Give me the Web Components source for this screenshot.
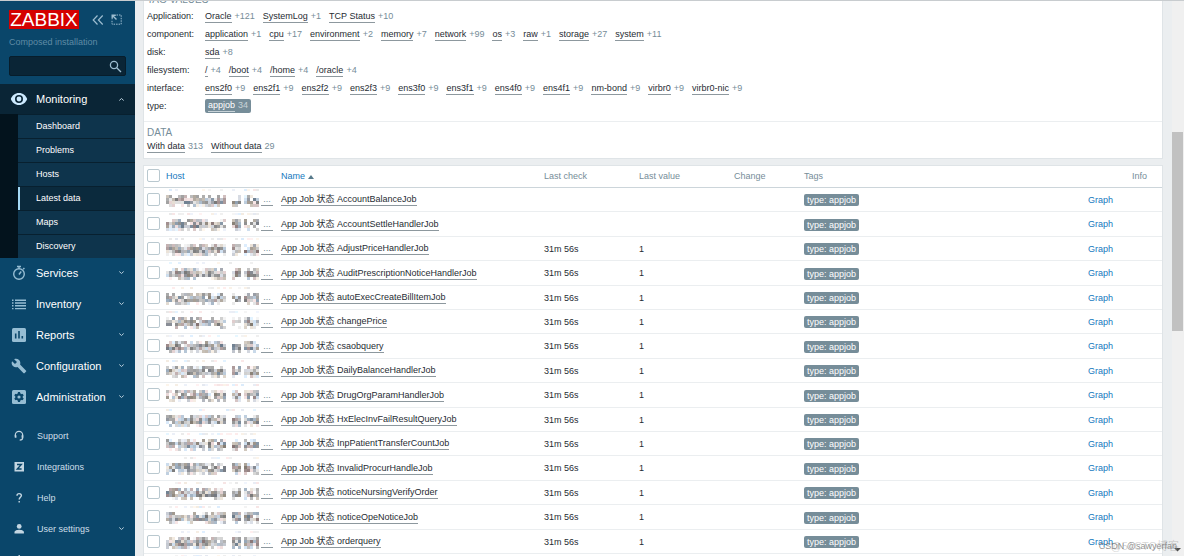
<!DOCTYPE html>
<html lang="en">
<head>
<meta charset="utf-8">
<title>Latest data</title>
<style>
html, body { height: 100%; margin: 0; }
body {
  font-family: "Liberation Sans", Arial, "Noto Sans CJK SC", sans-serif;
  font-size: 9px; line-height: 12px; color: #1f2c33; background: #ebeef0; overflow: hidden;
}
</style>
</head>
<body>
<app-shell>
  <side-bar slot="side">
    <nav-item label="Monitoring" icon="eye" open slot="main">
      <sub-item label="Dashboard"></sub-item>
      <sub-item label="Problems"></sub-item>
      <sub-item label="Hosts"></sub-item>
      <sub-item label="Latest data" selected></sub-item>
      <sub-item label="Maps"></sub-item>
      <sub-item label="Discovery"></sub-item>
    </nav-item>
    <nav-item label="Services" icon="timer" more slot="main"></nav-item>
    <nav-item label="Inventory" icon="list" more slot="main"></nav-item>
    <nav-item label="Reports" icon="chart" more slot="main"></nav-item>
    <nav-item label="Configuration" icon="wrench" more slot="main"></nav-item>
    <nav-item label="Administration" icon="gear" more slot="main"></nav-item>
    <nav-item label="Support" icon="headset" small slot="foot"></nav-item>
    <nav-item label="Integrations" icon="zed" small slot="foot"></nav-item>
    <nav-item label="Help" icon="help" small slot="foot"></nav-item>
    <nav-item label="User settings" icon="user" small more slot="foot"></nav-item>
    <nav-item label="Sign out" icon="power" small slot="foot"></nav-item>
  </side-bar>
  <filter-panel></filter-panel>
  <data-table></data-table>
  <scroll-track slot="track"></scroll-track>
  <page-mark slot="mark"></page-mark>
</app-shell>

<script>
const ICONS = {
  eye: '<svg width="18" height="18" viewBox="0 0 18 18"><path fill="currentColor" fill-rule="evenodd" d="M9 3C5 3 2 5.600.8 9 2 12.400 5 15 9 15s7-2.600 8.200-6C16 5.600 13 3 9 3zm0 10a4 4 0 1 1 0-8 4 4 0 0 1 0 8z"/><circle cx="9" cy="9" r="2.400" fill="currentColor"/></svg>',
  timer: '<svg width="18" height="18" viewBox="0 0 18 18" fill="none" stroke="currentColor"><circle cx="9" cy="10" r="5.300" stroke-width="1.400"/><path stroke-width="1.400" d="M7 2.500h4M9 2.500v2M13.200 5.200l1.200-1.200"/><path stroke-width="1.500" d="M9 10.500l2.200-3"/></svg>',
  list: '<svg width="18" height="18" viewBox="0 0 18 18" fill="currentColor"><path d="M2 4.500h1.500V6H2zM5 4.500h11V6H5zM2 7.300h1.500v1.500H2zM5 7.300h11v1.500H5zM2 10.100h1.500v1.500H2zM5 10.100h11v1.500H5zM2 12.900h1.500v1.300H2zM5 12.900h11v1.300H5z"/></svg>',
  chart: '<svg width="18" height="18" viewBox="0 0 18 18"><rect x="2" y="2" width="14" height="14" rx="1.500" fill="currentColor"/><path stroke="#0a466a" stroke-width="1.600" d="M5.700 7.500v5M9 5v7.500M12.300 10v2.500"/></svg>',
  wrench: '<svg width="16" height="16" viewBox="0 0 24 24"><path fill="currentColor" d="M22.700 19l-9.100-9.100c.9-2.300.4-5-1.500-6.900-2-2-5-2.400-7.400-1.300L9 6 6 9 1.600 4.700C.4 7.100.9 10.100 2.900 12.100c1.900 1.900 4.600 2.400 6.900 1.500l9.100 9.100c.4.4 1 .4 1.400 0l2.300-2.300c.5-.4.5-1.100.1-1.400z"/></svg>',
  gear: '<svg width="18" height="18" viewBox="0 0 18 18"><rect x="2" y="2" width="14" height="14" rx="1.500" fill="currentColor"/><circle cx="9" cy="9" r="2.700" fill="none" stroke="#0a466a" stroke-width="2.200"/><path stroke="#0a466a" stroke-width="2.200" d="M9 4.100v1.800M9 12.100v1.800M4.800 6.600l1.500.9M11.700 10.500l1.500.9M4.800 11.400l1.500-.9M11.700 7.500l1.500-.9"/></svg>',
  headset: '<svg width="12" height="12" viewBox="0 0 12 12" fill="none" stroke="currentColor"><path stroke-width="1.200" d="M2.300 6.500V5a3.700 3.700 0 0 1 7.400 0v2.500c0 1.700-1 2.700-3 2.700"/><path stroke-width="1.700" d="M2.600 5.200v2.600M9.400 5.200v2.600"/></svg>',
  zed: '<svg width="12" height="12" viewBox="0 0 12 12"><rect x="1.500" y="1" width="9.500" height="9.500" fill="currentColor"/><path fill="none" stroke="#0a466a" stroke-width="1.400" d="M4 3.500h4.300L4.300 8h4.300"/></svg>',
  help: '<svg width="12" height="12" viewBox="0 0 12 12" fill="none" stroke="currentColor"><path stroke-width="1.400" d="M4 3.800C4 1 8.400 1 8.400 3.600 8.400 5.300 6.200 5.500 6.200 7.600M6.200 9v1.500"/></svg>',
  user: '<svg width="12" height="12" viewBox="0 0 12 12" fill="currentColor"><circle cx="6.200" cy="3.400" r="2.400"/><path d="M1.500 10.500V9.200C1.500 7.500 4.500 6.800 6.200 6.800s4.700.7 4.700 2.400v1.300z"/></svg>',
  power: '<svg width="12" height="12" viewBox="0 0 12 12" fill="none" stroke="currentColor" stroke-width="1.400"><path d="M6.200 1v5M3.500 2.800a4 4 0 1 0 5.400 0"/></svg>'
};

function define(name, markup) {
  const tpl = document.createElement('template');
  customElements.define(name, class extends HTMLElement {
    connectedCallback() {
      if (this.shadowRoot) return;
      tpl.innerHTML = typeof markup === 'function' ? markup(this) : markup;
      this.attachShadow({ mode: 'open' }).append(tpl.content.cloneNode(true));
    }
  });
}

define('app-shell', `<style>
:host { display: flex; height: 100%; min-height: 0; position: relative; box-sizing: border-box; border-top: 1px solid #c8cccf; overflow: hidden; }
main { flex: 1; min-width: 0; padding: 0 9px 0 8px; display: flex; flex-direction: column; gap: 6px; overflow: hidden; }
</style><slot name="side"></slot><main><slot></slot></main><slot name="track"></slot><slot name="mark"></slot>`);

define('side-bar', `<style>
:host { display: block; flex: none; width: 135px; background: #0a466a; overflow: hidden; }
header { padding: 9px 9px 8px; }
.top { display: flex; align-items: center; }
.logo { background: #d40000; color: #fff; font-size: 19px; line-height: 19px; padding: 0 1px; text-decoration: none; margin-right: 13px; width: 68px; text-align: center; }
button { border: 0; background: none; padding: 0; color: #9dbdd0; display: flex; }
.top button + button { margin-left: 7px; }
.server { color: #5f8ba5; margin: 6px 0; line-height: 15px; }
form { display: flex; align-items: center; box-sizing: border-box; height: 20px; background: #0a2536; border: 1px solid #071d2b; border-radius: 2px; padding-right: 3px; }
input { flex: 1; min-width: 0; border: 0; outline: 0; background: none; color: #fff; font: inherit; padding: 0 4px; }
footer { padding-top: 8px; }
</style>
<header>
  <div class="top"><a class="logo" href="#">ZABBIX</a>
    <button aria-label="Collapse"><svg width="12" height="12" viewBox="0 0 12 12" fill="none" stroke="currentColor" stroke-width="1.200"><path d="M5.500 1.500L1.200 6l4.300 4.500M10.700 1.500L6.400 6l4.300 4.500"/></svg></button>
    <button aria-label="Hide"><svg width="11" height="11" viewBox="0 0 11 11" fill="none" stroke="currentColor"><path stroke-dasharray="1.500 1" d="M5.500 1h4.700v9.200H1V5.500"/><path stroke-width="1.400" d="M1.200 4.800V1.200h3.600M1.500 1.500l4 4"/></svg></button>
  </div>
  <div class="server">Composed installation</div>
  <form><input type="text" aria-label="Search"><button type="button" aria-label="Search"><svg width="13" height="13" viewBox="0 0 13 13" fill="none" stroke="currentColor" stroke-width="1.300"><circle cx="5" cy="5" r="3.600"/><path d="M7.700 7.700l4.300 4.300"/></svg></button></form>
</header>
<nav><slot name="main"></slot></nav>
<footer><slot name="foot"></slot></footer>`);

define('nav-item', el => {
  const arrow = el.hasAttribute('open') ? 'M1.300 4.500L3.500 2.500 5.700 4.500' : 'M1.300 2.500L3.500 4.500 5.700 2.500';
  const chevron = el.hasAttribute('open') || el.hasAttribute('more')
    ? `<svg width="7" height="7" viewBox="0 0 7 7" fill="none" stroke="currentColor"><path d="${arrow}"/></svg>` : '';
  return `<style>
:host { display: block; }
a { display: flex; align-items: center; box-sizing: border-box; height: 31px; padding: 0 9px 2px; color: #fff; font-size: 11px; text-decoration: none; }
.icon { width: 19px; display: flex; justify-content: center; margin-right: 8px; color: #96bdd3; }
.label { flex: 1; white-space: nowrap; }
svg { display: block; }
a > svg { margin-right: 1px; color: #b9cedb; }
:host([small]) a { font-size: 9px; color: #cfdfe9; }
:host([small]) .icon { color: #c3d6e2; margin-right: 9px; }
:host([open]) a { background: #0a2536; height: 30px; padding-bottom: 0; }
:host([open]) .icon { color: #cdeaff; }
.sub { padding-left: 18px; background: #03131d; }
</style><a href="#"><span class="icon">${ICONS[el.getAttribute('icon')]}</span><span class="label">${el.getAttribute('label')}</span>${chevron}</a><div class="sub"><slot></slot></div>`;
});

define('sub-item', el => `<style>
:host { display: block; background: #0e344c; border-top: 1px solid #08202f; }
:host([selected]) { background: #0b2a3d; }
a { display: block; line-height: 23px; padding-left: 16px; border-left: 2px solid transparent; color: #fff; text-decoration: none; }
:host([selected]) a { border-color: #a5d9f5; }
</style><a href="#">${el.getAttribute('label')}</a>`);

const TAGS = [
  ['Application:', 'Oracle +121|SystemLog +1|TCP_Status +10'],
  ['component:', 'application +1|cpu +17|environment +2|memory +7|network +99|os +3|raw +1|storage +27|system +11'],
  ['disk:', 'sda +8'],
  ['filesystem:', '/ +4|/boot +4|/home +4|/oracle +4'],
  ['interface:', 'ens2f0 +9|ens2f1 +9|ens2f2 +9|ens2f3 +9|ens3f0 +9|ens3f1 +9|ens4f0 +9|ens4f1 +9|nm-bond +9|virbr0 +9|virbr0-nic +9'],
  ['type:', 'appjob 34']
];
define('count-link', `<style>
:host { display: inline-flex; align-items: baseline; gap: 3px; color: #768d99; white-space: nowrap; line-height: 12px; }
a { color: #1f2c33; text-decoration: none; border-bottom: 1px solid #8d989e; line-height: 12px; }
:host([selected]) { background: #768d99; color: #c8d3d8; border-radius: 2px; padding: 0 3px 1px; }
:host([selected]) a { color: #fff; border-color: #c8d3d8; }
</style><a href="#"><slot></slot></a><slot name="count"></slot>`);

const countLink = s => {
  const [name, n] = s.split(' ');
  return `<count-link${name === 'appjob' ? ' selected' : ''}>${name.replace('_', ' ')}<span slot="count">${n}</span></count-link>`;
};
define('filter-panel', `<style>
:host { display: block; flex: none; background: #fff; border: 1px solid #dfe4e7; border-top: 0; margin-top: -9px; }
h4 { margin: 0; font-weight: normal; font-size: 10px; line-height: 13px; color: #768d99; text-transform: uppercase; }
.tags { padding: 1px 3px 6px; border-bottom: 1px solid #ebeef0; }
dl { margin: 0; padding-top: 1px; display: grid; grid-template-columns: 58px 1fr; grid-auto-rows: 18px; align-items: center; }
dd { margin: 0; display: flex; gap: 8px; align-items: center; }
.data { padding: 4px 3px 5px; }
.links { display: flex; gap: 8px; padding-top: 1px; }
</style>
<section class="tags"><h4>Tag values</h4><dl>${TAGS.map(([k, v]) => `<dt>${k}</dt><dd>${v.split('|').map(countLink).join('')}</dd>`).join('')}</dl></section>
<section class="data"><h4>Data</h4><div class="links"><count-link>With data<span slot="count">313</span></count-link><count-link>Without data<span slot="count">29</span></count-link></div></section>`);

/* Masked host name: a strip of 3px blocks, seeded by its row number. */
define('masked-name', el => {
  let seed = Number(el.getAttribute('seed')) * 7919 + 17;
  const rnd = () => (seed = (seed * 16807) % 2147483647) / 2147483647;
  for (let i = 0; i < 5; i++) rnd();
  const tints = [[0, 0, 0], [0, 0, 0], [-4, 0, 8], [14, -4, -4], [-14, 2, 18], [10, 2, -8]];
  let out = '';
  const cell = (x, y, h, lo, hi) => {
    const g = lo + rnd() * (hi - lo), t = tints[Math.floor(rnd() * 6)];
    const c = t.map(d => Math.round(Math.min(255, Math.max(0, g + d)))).join();
    out += `<rect x="${x}" y="${y}" width="3" height="${h}" fill="rgb(${c})"/>`;
  };
  for (let x = 0; x < 31; x++) {
    const gap = x === 20 || x === 21 || x === 25;
    if (rnd() < .4) cell(x * 3, 0, 2, 232, 246);
    if (!gap && rnd() < .7) cell(x * 3, 6, 3, 150, 248);
    if (!gap && rnd() < .95) cell(x * 3, 9, 3, 120, 235);
    if (!gap && rnd() < .95) cell(x * 3, 12, 3, 120, 235);
    if (!gap && rnd() < .6) cell(x * 3, 15, 3, 180, 245);
  }
  return `<style>:host { display: block; width: 95px; } svg { display: block; }</style><svg width="94" height="22" viewBox="0 0 94 22" shape-rendering="crispEdges">${out}</svg>`;
});

const JOBS = ['AccountBalanceJob', 'AccountSettleHandlerJob', 'AdjustPriceHandlerJob', 'AuditPrescriptionNoticeHandlerJob', 'autoExecCreateBillItemJob', 'changePrice', 'csaobquery', 'DailyBalanceHandlerJob', 'DrugOrgParamHandlerJob', 'HxElecInvFailResultQueryJob', 'InpPatientTransferCountJob', 'InvalidProcurHandleJob', 'noticeNursingVerifyOrder', 'noticeOpeNoticeJob', 'orderquery'];
define('data-table', `<style>
:host { display: block; flex: none; background: #fff; border: 1px solid #dfe4e7; }
table { width: 100%; table-layout: fixed; border-collapse: separate; border-spacing: 0; }
th, td { padding: 0; text-align: left; font-weight: normal; white-space: nowrap; vertical-align: middle; box-sizing: border-box; border-bottom: 1px solid #ebeef0; }
th { color: #768d99; height: 22px; padding-bottom: 1px; border-color: #ccd5da; }
td { height: 24px; }
tbody tr:nth-child(5n+2) td, tbody tr:nth-child(5n+4) td { height: 25px; }
.c { width: 22px; } .h { width: 115px; } .n { width: 263px; } .v { width: 95px; } .d { width: 70px; } .g { width: 44px; } .i { width: 30px; }
th:first-child, td:first-child { padding-left: 3px; }
input { appearance: none; display: block; box-sizing: border-box; width: 13px; height: 13px; margin: 0 0 1px; border: 1px solid #b9c8cf; border-radius: 2px; background: #fff; }
a { color: #1578be; text-decoration: none; }
.host { display: flex; align-items: center; height: 22px; }
.host a, .name { color: #1f2c33; border-bottom: 1px solid #8d989e; }
.host a { width: 12px; color: #768d99; text-align: center; }
.name { display: inline-block; line-height: 12px; }
.tag { display: inline-block; background: #768d99; color: #fff; border-radius: 2px; padding: 0 3px; line-height: 12px; margin-top: 1px; }
.sort { display: inline-block; margin-left: 3px; border: 3px solid transparent; border-top: 0; border-bottom: 4px solid #57798a; }
</style>
<table>
<colgroup><col class="c"><col class="h"><col class="n"><col class="v"><col class="v"><col class="d"><col><col class="g"><col class="i"></colgroup>
<thead><tr><th><input type="checkbox" aria-label="Select all"></th><th><a href="#">Host</a></th><th><a href="#">Name<span class="sort"></span></a></th><th>Last check</th><th>Last value</th><th>Change</th><th>Tags</th><th></th><th>Info</th></tr></thead>
<tbody>${JOBS.map((j, i) => `<tr><td><input type="checkbox" aria-label="${j}"></td><td><div class="host"><masked-name seed="${i + 1}"></masked-name><a href="#">...</a></div></td><td><a class="name" href="#">App Job 状态 ${j}</a></td><td>${i > 1 ? '31m 56s' : ''}</td><td>${i > 1 ? '1' : ''}</td><td></td><td><span class="tag">type: appjob</span></td><td><a href="#">Graph</a></td><td></td></tr>`).join('')}
<tr><td></td><td><div class="host"><masked-name seed="16"></masked-name></div></td><td></td><td></td><td></td><td></td><td></td><td></td><td></td></tr></tbody>
</table>`);

define('scroll-track', `<style>
:host { display: grid; grid-template-rows: 131fr 199fr 225fr; flex: none; width: 12px; background: #f0f0f0; }
i { grid-row: 2; background: #c1c1c1; margin-right: 1px; }
svg { grid-row: 3; align-self: end; margin: 0 2px 4px; }
</style><i></i><svg width="7" height="5" viewBox="0 0 7 5"><path fill="#505050" d="M0 1h7L3.500 4.500z"/></svg>`);

define('page-mark', `<style>
:host { position: absolute; right: 5px; bottom: 4px; display: grid; justify-items: end; line-height: 12px; pointer-events: none; }
span { grid-area: 1 / 1; color: rgba(110,110,110,.75); margin-right: 2px; }
.b { color: rgba(150,150,150,.4); font-size: 11px; margin: 0; }
</style><span class="b">@51CTO博客</span><span>CSDN @sawyerfan</span>`);
</script>
</body>
</html>
